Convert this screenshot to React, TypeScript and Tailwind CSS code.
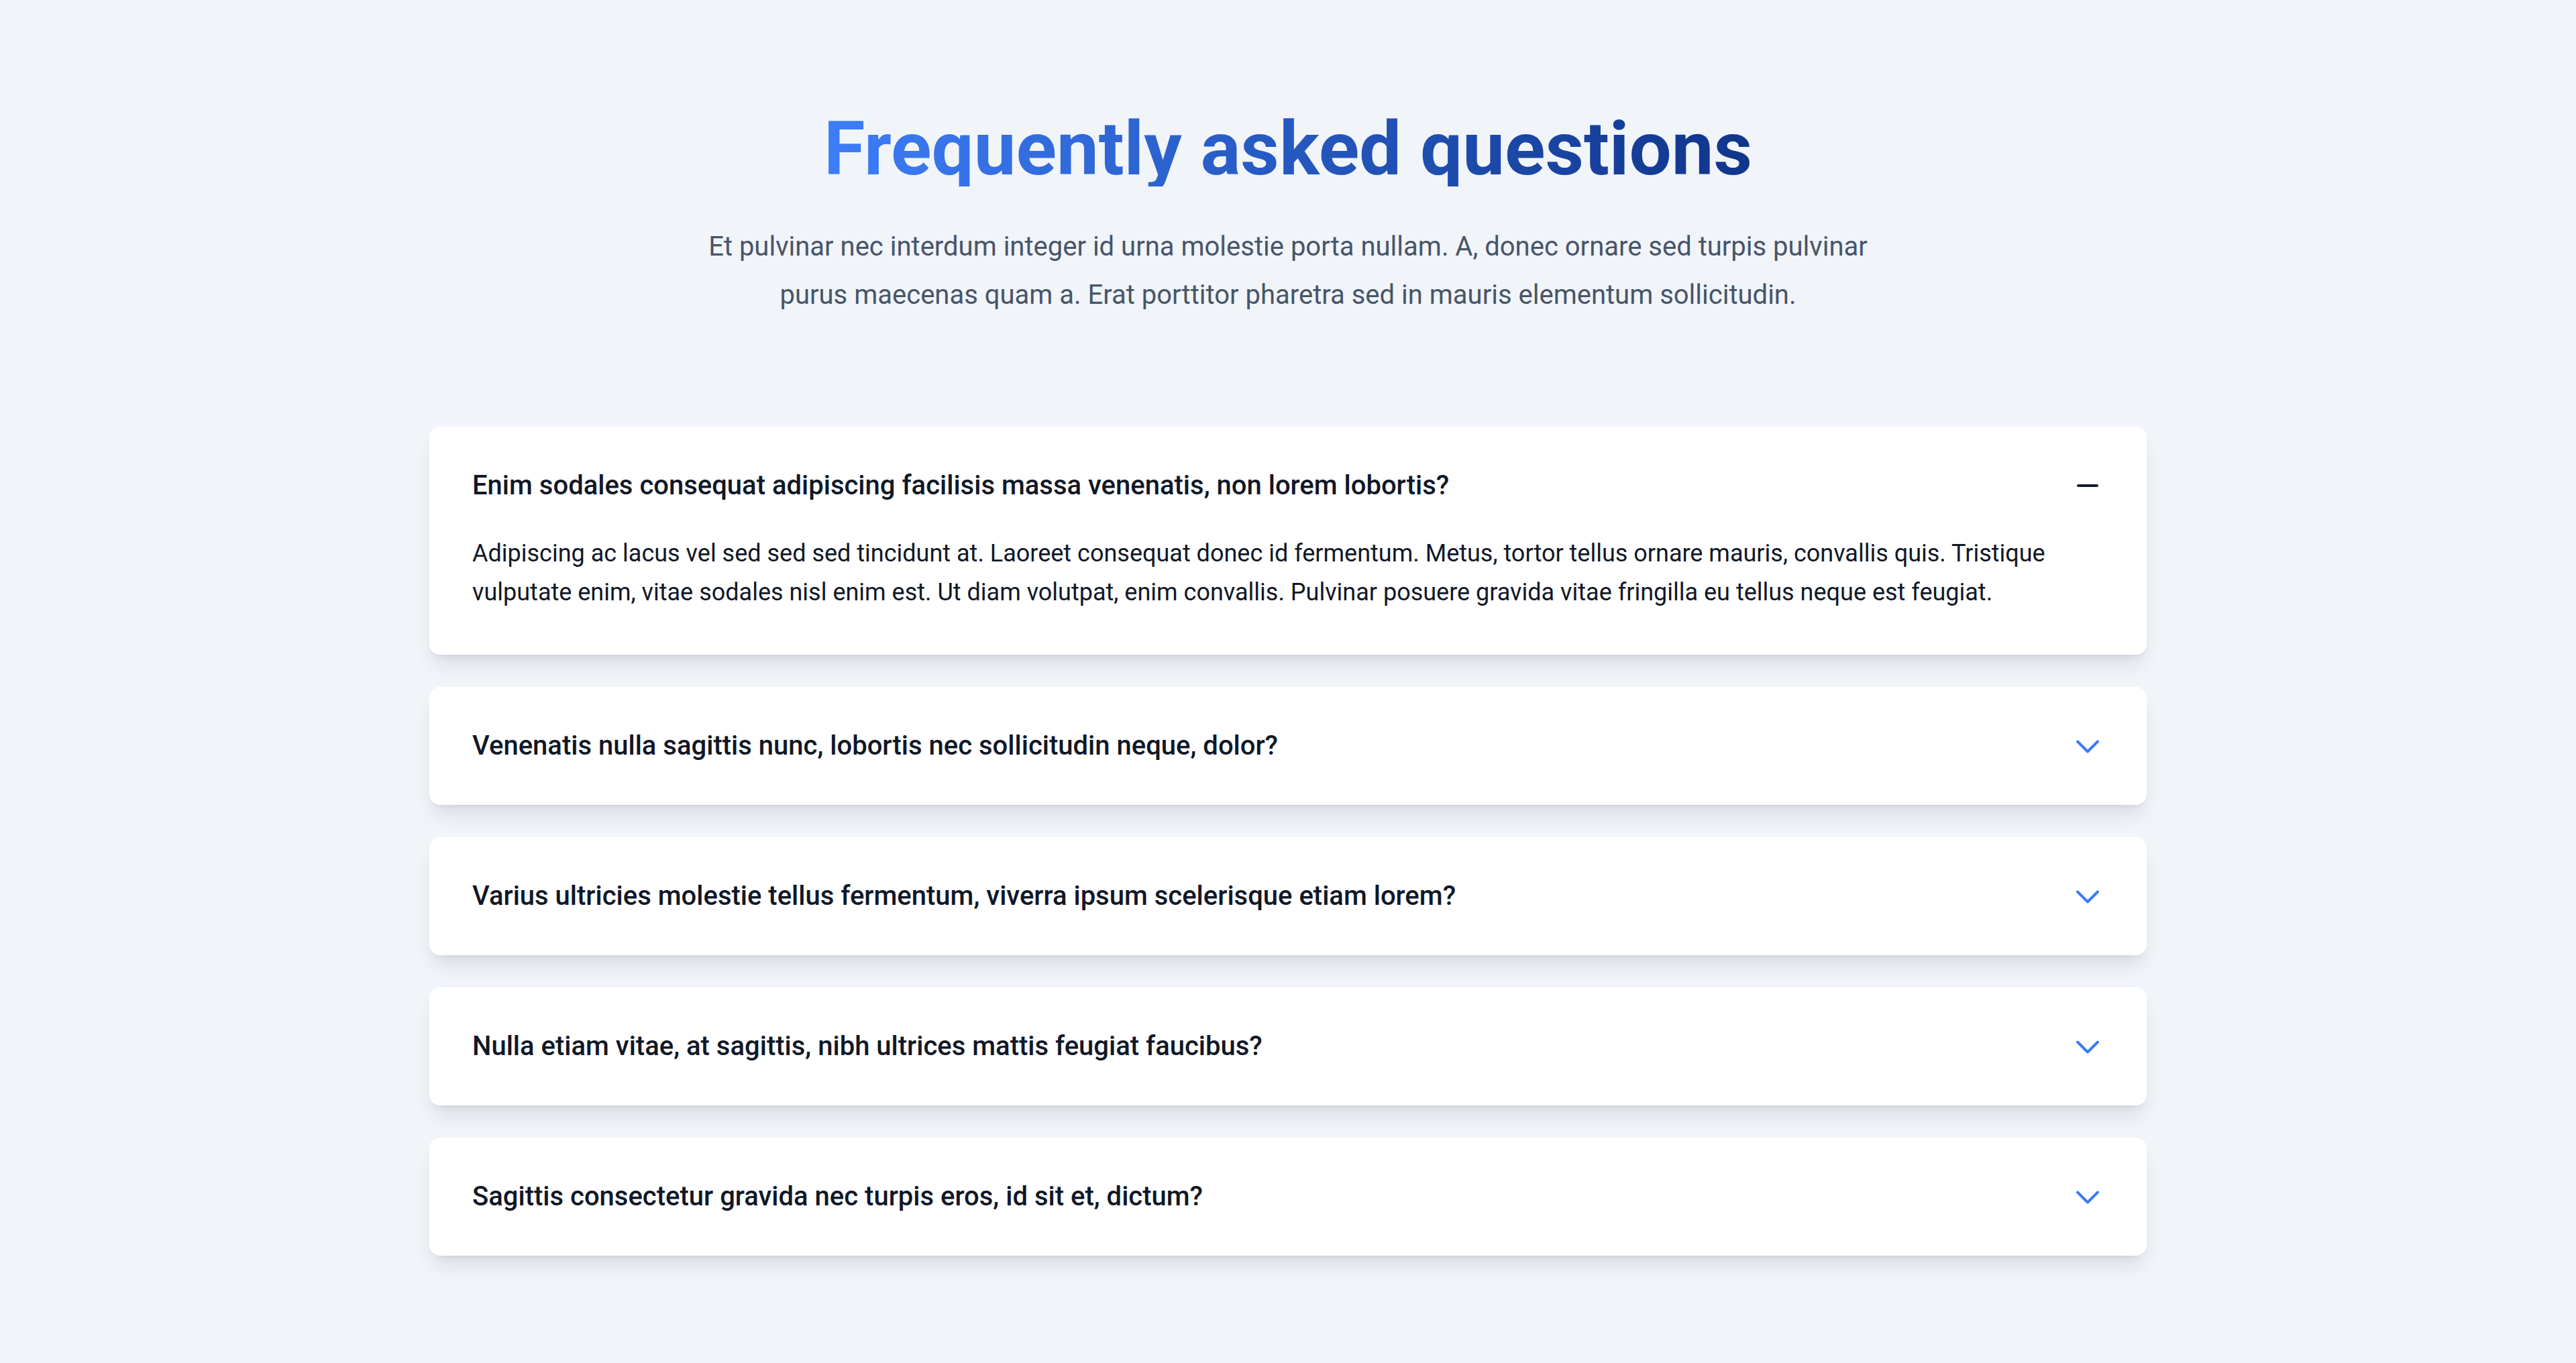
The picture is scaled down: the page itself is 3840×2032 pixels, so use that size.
import { useState } from 'react';

const faqs = [
  {
    question: 'Enim sodales consequat adipiscing facilisis massa venenatis, non lorem lobortis?',
    answer:
      'Adipiscing ac lacus vel sed sed sed tincidunt at. Laoreet consequat donec id fermentum. Metus, tortor tellus ornare mauris, convallis quis. Tristique vulputate enim, vitae sodales nisl enim est. Ut diam volutpat, enim convallis. Pulvinar posuere gravida vitae fringilla eu tellus neque est feugiat.'
  },
  {
    question: 'Venenatis nulla sagittis nunc, lobortis nec sollicitudin neque, dolor?',
    answer:
      'Adipiscing ac lacus vel sed sed sed tincidunt at. Laoreet consequat donec id fermentum. Metus, tortor tellus ornare mauris, convallis quis.'
  },
  {
    question: 'Varius ultricies molestie tellus fermentum, viverra ipsum scelerisque etiam lorem?',
    answer:
      'Tristique vulputate enim, vitae sodales nisl enim est. Ut diam volutpat, enim convallis. Pulvinar posuere gravida vitae fringilla eu tellus neque est feugiat.'
  },
  {
    question: 'Nulla etiam vitae, at sagittis, nibh ultrices mattis feugiat faucibus?',
    answer:
      'Laoreet consequat donec id fermentum. Metus, tortor tellus ornare mauris, convallis quis.'
  },
  {
    question: 'Sagittis consectetur gravida nec turpis eros, id sit et, dictum?',
    answer:
      'Ut diam volutpat, enim convallis. Pulvinar posuere gravida vitae fringilla eu tellus neque est feugiat.'
  }
];

function MinusIcon() {
  return (
    <svg
      viewBox="0 0 24 24"
      fill="none"
      stroke="currentColor"
      strokeWidth={2}
      strokeLinecap="round"
      strokeLinejoin="round"
      className="w-[48px] h-[48px] text-[#111827]"
    >
      <path d="M5 12h14" />
    </svg>
  );
}

function ChevronIcon() {
  return (
    <svg
      viewBox="0 0 24 24"
      fill="none"
      stroke="currentColor"
      strokeWidth={2}
      strokeLinecap="round"
      strokeLinejoin="round"
      className="w-[48px] h-[48px] text-[#3b7cf6]"
    >
      <path d="m19.5 8.75-7.5 7.5-7.5-7.5" />
    </svg>
  );
}

function FaqItem({ question, answer, open, onToggle }) {
  return (
    <div className="bg-white rounded-[16px] px-[64px] py-[64px] shadow-[0_20px_30px_-6px_rgba(15,23,42,0.1),0_8px_12px_-8px_rgba(15,23,42,0.1)]">
      <button
        type="button"
        onClick={onToggle}
        className="flex w-full items-center justify-between gap-[48px] text-left"
      >
        <span className="text-[40px] leading-[48px] font-medium text-[#111827]">
          {question}
        </span>
        <span className="flex h-[48px] items-center shrink-0">
          {open ? <MinusIcon /> : <ChevronIcon />}
        </span>
      </button>
      {open && (
        <p className="mt-[48px] text-[36px] leading-[58px] text-[#111827]">
          {answer}
        </p>
      )}
    </div>
  );
}

export default function App() {
  const [openIndex, setOpenIndex] = useState<number | null>(0);

  return (
    <div className="min-h-screen bg-[#f1f4f9] font-['Roboto',sans-serif] px-[64px] pt-[166px] pb-[160px]">
      <div className="flex flex-col items-center text-center">
        <h1 className="inline-block bg-linear-to-r from-[#3d7ef8] to-[#10358b] bg-clip-text text-transparent text-[112px] leading-none font-bold">
          Frequently asked questions
        </h1>
        <p className="mt-[54px] max-w-[1792px] text-[40px] leading-[72px] text-[#475569]">
          Et pulvinar nec interdum integer id urna molestie porta nullam. A, donec ornare sed turpis pulvinar purus maecenas quam a. Erat porttitor pharetra sed in mauris elementum sollicitudin.
        </p>
      </div>

      <div className="mx-auto mt-[160px] flex max-w-[2560px] flex-col gap-[48px]">
        {faqs.map((faq, i) => (
          <FaqItem
            key={faq.question}
            question={faq.question}
            answer={faq.answer}
            open={openIndex === i}
            onToggle={() => setOpenIndex(openIndex === i ? null : i)}
          />
        ))}
      </div>
    </div>
  );
}
